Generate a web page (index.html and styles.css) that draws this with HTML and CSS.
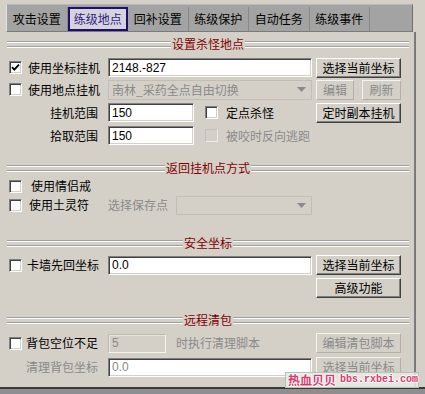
FILE: index.html
```html
<!DOCTYPE html>
<html>
<head>
<meta charset="utf-8">
<link rel="stylesheet" href="styles.css">
</head>
<body>
<div class="app">
  <div class="tabs">
    <div class="tab">攻击设置</div>
    <div class="tab active">练级地点</div>
    <div class="tab">回补设置</div>
    <div class="tab">练级保护</div>
    <div class="tab">自动任务</div>
    <div class="tab">练级事件</div>
  </div>
  <div class="page">
    <div class="sec s1"><span>设置杀怪地点</span></div>

    <div class="row r1">
      <div class="lbl"><span class="cb"><svg viewBox="0 0 11 11" width="11" height="11"><path d="M2 5.2 L4.3 7.6 L9 2.6" fill="none" stroke="#000" stroke-width="1.9"/></svg></span><span>使用坐标挂机</span></div>
      <div class="input">2148.-827</div>
      <div class="btn">选择当前坐标</div>
    </div>

    <div class="row r2">
      <div class="lbl"><span class="cb"></span><span>使用地点挂机</span></div>
      <div class="select dis"><span>南林_采药全点自由切换</span><svg class="arrow" viewBox="0 0 9 5" width="9" height="5"><path d="M0 0 H9 L4.5 5 Z" fill="#8a8a8a"/></svg></div>
      <div class="btnpair"><div class="btn off small">编辑</div><div class="btn off small">刷新</div></div>
    </div>

    <div class="row r3">
      <div class="lbl right">挂机范围</div>
      <div class="cell">
        <div class="input short">150</div>
        <span class="cb inline"></span><span class="txt">定点杀怪</span>
      </div>
      <div class="btn">定时副本挂机</div>
    </div>

    <div class="row r4">
      <div class="lbl right">拾取范围</div>
      <div class="cell">
        <div class="input short">150</div>
        <span class="cb inline cbdis"></span><span class="txt grey">被咬时反向逃跑</span>
      </div>
      <div></div>
    </div>

    <div class="sec s2"><span>返回挂机点方式</span></div>

    <div class="row r5">
      <div class="lbl g9"><span class="cb"></span><span>使用情侣戒</span></div>
      <div></div>
      <div></div>
    </div>

    <div class="row r6">
      <div class="lbl g7"><span class="cb"></span><span>使用土灵符</span></div>
      <div class="cell">
        <span class="grey">选择保存点</span>
        <div class="select dis narrow"><span></span><svg class="arrow" viewBox="0 0 9 5" width="9" height="5"><path d="M0 0 H9 L4.5 5 Z" fill="#8a8a8a"/></svg></div>
      </div>
      <div></div>
    </div>

    <div class="sec s3"><span>安全坐标</span></div>

    <div class="row r7">
      <div class="lbl g5"><span class="cb"></span><span>卡墙先回坐标</span></div>
      <div class="input">0.0</div>
      <div class="btn">选择当前坐标</div>
    </div>

    <div class="row r8">
      <div></div>
      <div></div>
      <div class="btn">高级功能</div>
    </div>

    <div class="sec s4"><span>远程清包</span></div>

    <div class="row r9">
      <div class="lbl g4"><span class="cb"></span><span>背包空位不足</span></div>
      <div class="cell">
        <div class="input tiny dis">5</div>
        <span class="txt2 grey">时执行清理脚本</span>
      </div>
      <div class="btn off">编辑清包脚本</div>
    </div>

    <div class="row r10">
      <div class="lbl right grey">清理背包坐标</div>
      <div class="input greytext">0.0</div>
      <div class="btn off">选择当前坐标</div>
    </div>
  </div>
  <div class="bottom"></div>
  <div class="watermark"><span class="wm-cn">热血贝贝</span><span class="wm-en">bbs.rxbei.com</span></div>
</div>
</body>
</html>
```
FILE: styles.css
```css
html, body {
  margin: 0;
  padding: 0;
}
body {
  background: #d4d0c8;
  font-family: "Noto Sans CJK SC", "Noto Sans", sans-serif;
  font-size: 12px;
  line-height: 14px;
  color: #000;
  width: 425px;
  height: 394px;
  overflow: hidden;
}
.app {
  position: relative;
  width: 425px;
  height: 394px;
  display: flex;
  flex-direction: column;
}

/* tabs */
.tabs {
  margin: 4px 0 0 6px;
  width: 407px;
  height: 28px;
  box-sizing: border-box;
  background: #a3a3a3;
  border-left: 1px solid #e6e4de;
  border-top: 1px solid #b8b8b8;
  border-right: 1px solid #6f6f6f;
  border-bottom: 1px solid #7a7a7a;
  display: flex;
  align-items: flex-end;
  flex-shrink: 0;
}
.tab {
  flex: 0 0 60.5px;
  height: 24px;
  box-sizing: border-box;
  display: flex;
  align-items: center;
  justify-content: center;
  border-right: 1px solid #888;
  padding-bottom: 1px;
}
.tab.active {
  border: 2px solid #1e0f6e;
  background: #d6d3df;
  color: #2e1f7d;
}

/* page */
.page {
  width: 414px;
  height: 355px;
  border-right: 2px solid #7a7a7a;
  display: flex;
  flex-direction: column;
  flex-shrink: 0;
}
.sec {
  display: flex;
  align-items: center;
  height: 14px;
  margin-left: 7px;
  width: 402px;
  color: #800000;
  flex-shrink: 0;
}
.sec::before, .sec::after {
  content: "";
  flex: 1;
  height: 7px;
  background: linear-gradient(#a0a0a0 0 1px, #ffffff 1px 2px, transparent 2px 5px, #a0a0a0 5px 6px, #ffffff 6px 7px);
}
.sec span { padding: 0 1px; }
.s1 { margin-top: 5px; }
.s2 { margin-top: 15px; }
.s3 { margin-top: 21px; }
.s4 { margin-top: 15px; }

.row {
  display: grid;
  grid-template-columns: 95px 204px 85px;
  column-gap: 4px;
  padding-left: 9px;
  align-items: center;
  height: 21px;
  flex-shrink: 0;
}
.r1 { margin-top: 6px; }
.r2 { margin-top: 1px; }
.r3 { margin-top: 2px; }
.r4 { margin-top: 2px; }
.r5 { margin-top: 2px; height: 18px; }
.r6 { height: 20px; }
.r7 { margin-top: 5px; height: 20px; }
.r8 { margin-top: 3px; height: 20px; }
.r9 { margin-top: 6px; height: 20px; }
.r10 { margin-top: 4px; height: 20px; }

.lbl {
  display: flex;
  align-items: center;
  gap: 6px;
  white-space: nowrap;
}
.lbl.g9 { gap: 9px; }
.lbl.g7 { gap: 7px; }
.lbl.g5 { gap: 5px; }
.lbl.g4 { gap: 4px; }
.lbl.right {
  justify-content: flex-end;
  padding-right: 6px;
}
.grey { color: #8a8a8a; }

.cell {
  display: flex;
  align-items: center;
  white-space: nowrap;
}

/* checkbox */
.cb {
  width: 13px;
  height: 13px;
  box-sizing: border-box;
  border: 1px solid;
  border-color: #808080 #ffffff #ffffff #808080;
  box-shadow: inset 1px 1px #404040, inset -1px -1px #d4d0c8;
  background: #fff;
  display: flex;
  align-items: center;
  justify-content: center;
  flex-shrink: 0;
}
.cb svg { display: block; }
.cb.inline { margin-left: 11px; }
.cb.cbdis {
  background: #d4d0c8;
  border-color: #c4c0b8 #ecebe6 #ecebe6 #c4c0b8;
  box-shadow: none;
}
.txt { margin-left: 8px; }
.txt2 { margin-left: 10px; }

/* inputs */
.input {
  height: 19px;
  box-sizing: border-box;
  border: 1px solid;
  border-color: #808080 #ffffff #ffffff #808080;
  box-shadow: inset 1px 1px #404040, inset -1px -1px #d4d0c8;
  background: #fff;
  padding-left: 3px;
  font-family: "Liberation Sans", sans-serif;
  font-size: 12px;
  display: flex;
  align-items: center;
  white-space: nowrap;
}
.input.short { width: 86px; }
.input.tiny {
  width: 58px;
}
.input.dis {
  background: #d4d0c8;
  border-color: #bdb9b1 #f4f3ef #f4f3ef #bdb9b1;
  box-shadow: inset 1px 1px #e6e4de;
  color: #8a8a8a;
}
.input.greytext { color: #8a8a8a; }

.select {
  height: 20px;
  box-sizing: border-box;
  display: flex;
  align-items: center;
  justify-content: space-between;
  padding: 0 5px 0 3px;
  white-space: nowrap;
}
.select.dis {
  border: 1px solid #c2beb6;
  background: #d4d0c8;
  color: #8a8a8a;
}
.select.narrow {
  width: 136px;
  margin-left: 8px;
  height: 19px;
}
.arrow { display: block; flex-shrink: 0; }

/* buttons */
.btn {
  height: 20px;
  box-sizing: border-box;
  border: 1px solid;
  border-color: #ffffff #404040 #404040 #ffffff;
  box-shadow: inset -1px -1px #808080;
  background: #d4d0c8;
  display: flex;
  align-items: center;
  justify-content: center;
  white-space: nowrap;
}
.btn.off {
  color: #8a8a8a;
  border-color: #f4f3ef #b4b0a8 #b4b0a8 #f4f3ef;
  box-shadow: none;
}
.btnpair {
  display: flex;
  gap: 8px;
}
.btn.small { width: 38px; }
.btnpair .btn.small:last-child { width: 39px; }

/* bottom */
.bottom {
  flex: 1;
  border-top: 2px solid #3a3a3a;
  background: #8e8e8e;
}

/* watermark */
.watermark {
  position: absolute;
  left: 285px;
  top: 372px;
  width: 134px;
  height: 16px;
  box-sizing: border-box;
  border: 1px solid #a9c6b6;
  background: rgba(236, 234, 228, 0.85);
  display: flex;
  align-items: center;
  padding-left: 2px;
  gap: 4px;
  color: #d93a6c;
  font-weight: bold;
  text-shadow: 1px 0 #fff, -1px 0 #fff, 0 1px #fff, 0 -1px #fff;
  white-space: nowrap;
}
.wm-cn { font-size: 12px; }
.wm-en {
  font-family: "Liberation Mono", monospace;
  font-size: 10px;
}
```
